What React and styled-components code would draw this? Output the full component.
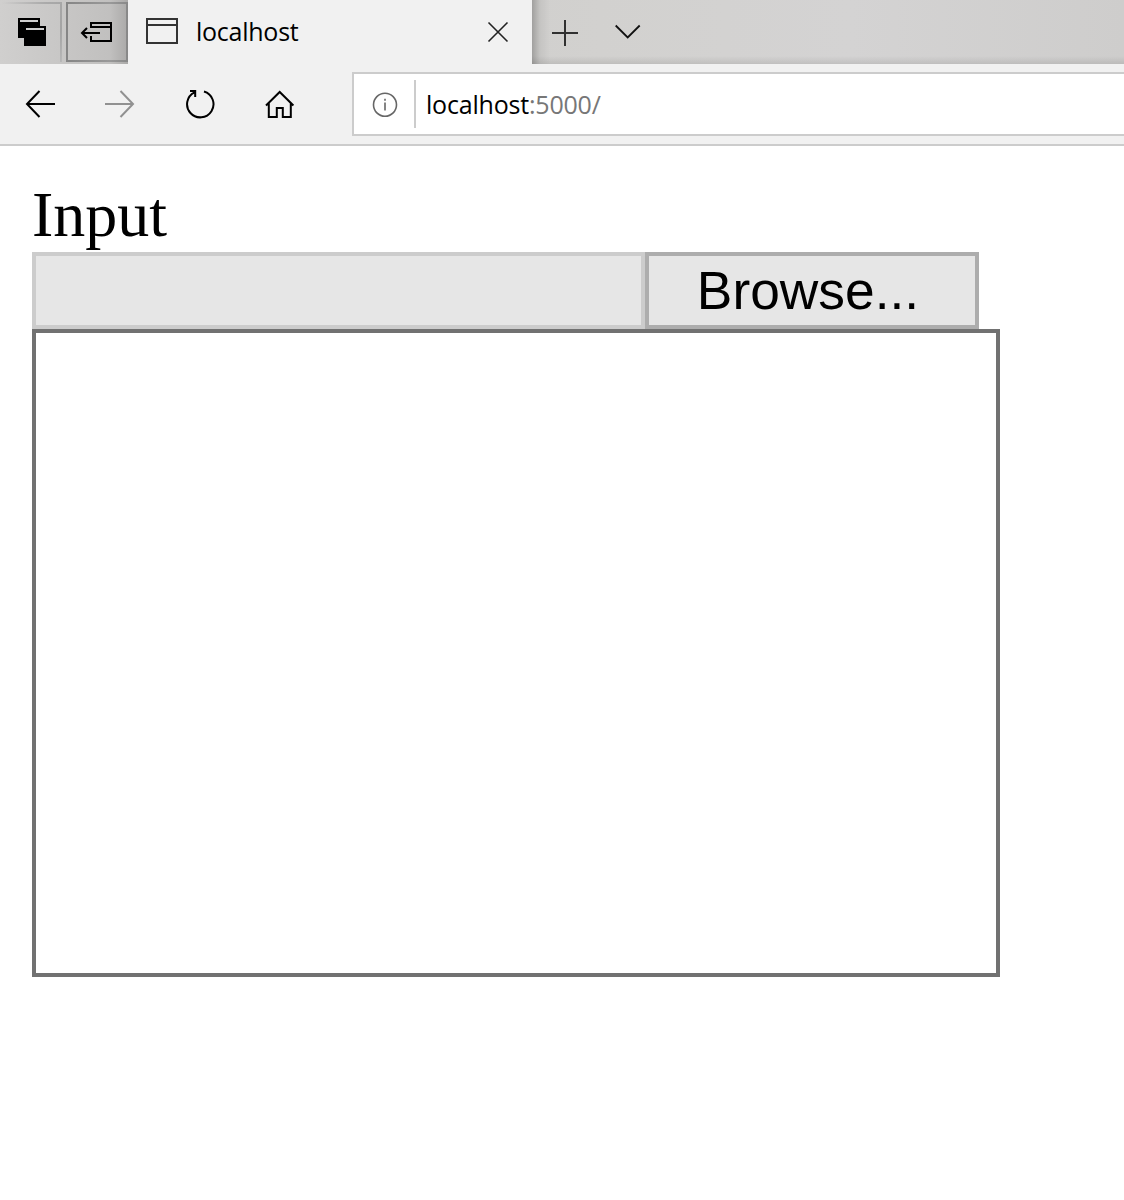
import React from "react";
import styled, { createGlobalStyle } from "styled-components";

const GlobalStyle = createGlobalStyle`
  *, *::before, *::after { box-sizing: border-box; }
  body { margin: 0; background: #fff; overflow: hidden; }
`;

const Window = styled.div`
  display: flex;
  flex-direction: column;
  height: 1200px;
  overflow: hidden;
  background: #fff;
`;

const TabStrip = styled.header`
  display: flex;
  height: 64px;
  background: linear-gradient(90deg, #c8c8c7 0, #cbcac9 128px, #d2d1cf 600px, #d4d3d3 850px, #cecdcc 1124px);
`;

const TabActions = styled.div`
  display: flex;
  gap: 4px;
  width: 128px;
  padding: 2px 0;
  background: linear-gradient(90deg, #d0cfce 0, #c8c7c6 60px, #c1c0bf 110px, #aaa9a8 128px);
`;

const TabAction = styled.button`
  display: flex;
  width: 62px;
  height: 60px;
  padding: 0;
  border: 2px solid;
  border-image: ${(p) => p.$edge} 2;
  border-width: ${(p) => (p.$open ? "2px 2px 0 0" : "2px")};
  background: none;
  svg { display: block; flex: none; margin: ${(p) => p.$offset}; }
`;

const Tab = styled.div`
  display: flex;
  align-items: center;
  width: 404px;
  height: 64px;
  padding: 0 22px 0 18px;
  background: #f1f1f1;
`;

const TabTitle = styled.span`
  flex: 1;
  margin: 0 0 2px 18px;
  font: 25px/32px "Open Sans", "Noto Sans", sans-serif;
  letter-spacing: -0.25px;
  color: #000;
`;

const StripTools = styled.div`
  display: flex;
  flex: 1;
  align-items: center;
  gap: 36px;
  padding: 1px 0 0 20px;
  background:
    linear-gradient(90deg, rgba(0, 0, 0, 0.23), rgba(0, 0, 0, 0.06) 8px, transparent 18px),
    linear-gradient(0deg, rgba(0, 0, 0, 0.09), transparent 8px);
`;

const Toolbar = styled.nav`
  display: flex;
  height: 82px;
  padding-top: 8px;
  background: #f1f1f1;
  border-bottom: 2px solid #ccc;
`;

const NavButtons = styled.div`
  display: flex;
  width: 352px;
`;

const NavButton = styled.button`
  display: flex;
  align-items: center;
  justify-content: center;
  width: 80px;
  height: 64px;
  padding: 0;
  border: 0;
  background: none;
  color: ${(p) => (p.$muted ? "#919191" : "#000")};
`;

const AddressBar = styled.div`
  display: flex;
  flex: 1;
  align-items: center;
  height: 64px;
  padding-left: 17px;
  border: 2px solid #ccc;
  border-right: 0;
  background: #fff;
`;

const Divider = styled.i`
  width: 2px;
  height: 48px;
  margin: 0 10px 0 15px;
  background: #ccc;
`;

const Address = styled.span`
  font: 25px/32px "Open Sans", "Noto Sans", sans-serif;
  letter-spacing: -0.2px;
  color: #000;
  span { color: #777; }
`;

const Page = styled.main`
  display: flex;
  flex-direction: column;
  align-items: flex-start;
  padding: 32px;
`;

const Label = styled.label`
  height: 74px;
  font: 64px/74px "Liberation Serif", "Times New Roman", serif;
  color: #000;
`;

const FilePicker = styled.div`
  display: flex;
  height: 77px;
`;

const FileName = styled.div`
  width: 613px;
  height: 77px;
  border: 4px solid #ccc;
  background: #e6e6e6;
`;

const BrowseButton = styled.button`
  width: 334px;
  height: 77px;
  padding: 0 8px 0 0;
  border: 4px solid #adadad;
  border-radius: 0;
  background: #e6e6e6;
  font: 53.33px/69px "Liberation Sans", Arial, sans-serif;
  color: #000;
`;

const Canvas = styled.div`
  width: 968px;
  height: 648px;
  border: 4px solid #717171;
`;

const Icon = ({ w = 32, h = 32, sw = 2, children, color = "currentColor" }) => (
  <svg width={w} height={h} viewBox={`0 0 ${w} ${h}`} fill="none" stroke={color} strokeWidth={sw}>
    {children}
  </svg>
);

export default function App() {
  return (
    <Window>
      <GlobalStyle />
      <TabStrip>
        <TabActions>
          <TabAction $open $offset="14px 0 0 18px" $edge="linear-gradient(110deg, transparent 5%, #aaa 55%, #a4a4a4 85%, #bbb)">
            <Icon w={28} h={28}>
              <path d="M0 0H22V8H28V28H6V20H0Z" fill="#000" stroke="none" />
              <path d="M2 3H20M8 11H26" stroke="#d0d0d0" />
            </Icon>
          </TabAction>
          <TabAction $offset="18px 0 0 12px" $edge="linear-gradient(90deg, #858585, #999 70%, #888)">
            <Icon w={32} h={20}>
              <path d="M11 6V1H31V19H11V14M11 5H31M20 11H2M7 6L2 11L7 16" />
            </Icon>
          </TabAction>
        </TabActions>
        <Tab>
          <Icon w={32} h={28} color="#333">
            <path d="M1 1H31V25H1ZM1 7H31" />
          </Icon>
          <TabTitle>localhost</TabTitle>
          <Icon w={24} h={24} sw={1.6} color="#222">
            <path d="M2.5 2.5L21.5 21.5M21.5 2.5L2.5 21.5" />
          </Icon>
        </Tab>
        <StripTools>
          <Icon w={26} h={26} color="#303030">
            <path d="M13 0V26M0 13H26" />
          </Icon>
          <Icon w={28} h={20} sw={1.8} color="#111">
            <path d="M1.7 2.5L13.7 14.5L25.7 2.5" />
          </Icon>
        </StripTools>
      </TabStrip>
      <Toolbar>
        <NavButtons>
          <NavButton aria-label="Back">
            <Icon><path d="M31 16H3.5M15.5 3L3 16L15.5 29" /></Icon>
          </NavButton>
          <NavButton aria-label="Forward" $muted>
            <Icon><path d="M1 16H28.5M16.5 3L29 16L16.5 29" /></Icon>
          </NavButton>
          <NavButton aria-label="Refresh">
            <Icon><path d="M10.5 4.3A13.2 13.2 0 1 0 20 3.5M6 3H11.2V9" /></Icon>
          </NavButton>
          <NavButton aria-label="Home">
            <Icon><path d="M2 17.5L15.7 4L29.4 17.5M4.8 15V29H12.8V20H18.8V29H26.8V15" /></Icon>
          </NavButton>
        </NavButtons>
        <AddressBar>
          <Icon w={28} h={28} sw={1.6} color="#666">
            <circle cx="14" cy="14.7" r="11.5" />
            <path d="M14 12.5V20.5M14 8.7V10.7" />
          </Icon>
          <Divider />
          <Address>localhost<span>:5000/</span></Address>
        </AddressBar>
      </Toolbar>
      <Page>
        <Label>Input</Label>
        <FilePicker>
          <FileName />
          <BrowseButton>Browse...</BrowseButton>
        </FilePicker>
        <Canvas />
      </Page>
    </Window>
  );
}
